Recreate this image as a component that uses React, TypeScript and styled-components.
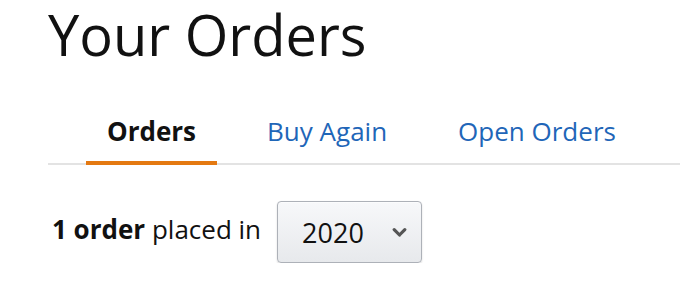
import { createGlobalStyle, styled } from 'styled-components';

const GlobalStyle = createGlobalStyle`
  html, body {
    margin: 0;
    padding: 0;
    background: #fff;
  }

  body {
    font-family: 'Open Sans', 'Noto Sans', Arial, sans-serif;
    color: #111;
  }
`;

const Page = styled.div`
  padding: 3px 0 0 48px;
`;

const Title = styled.h1`
  font-size: 56px;
  font-weight: 400;
  line-height: 1.4;
  margin: -8px 0 0;
`;

const TabBar = styled.nav`
  border-bottom: 2px solid #e3e3e3;
  display: flex;
  gap: 29px;
  margin-top: 43px;
  padding-left: 38px;
`;

const Tab = styled.a<{ $active?: boolean }>`
  border-bottom: 4px solid ${({ $active }) => ($active ? '#e47911' : 'transparent')};
  color: ${({ $active }) => ($active ? '#111' : '#1f66b8')};
  font-size: 26px;
  font-weight: ${({ $active }) => ($active ? 700 : 400)};
  line-height: 30px;
  margin-bottom: -2px;
  padding: 0 21px 15px;
  text-decoration: none;
`;

const FilterRow = styled.div`
  align-items: center;
  display: flex;
  gap: 16px;
  margin-top: 36px;
  padding-left: 4px;
`;

const Summary = styled.span`
  font-size: 26px;
  margin-bottom: 6px;

  & b {
    font-weight: 700;
  }
`;

const YearSelect = styled.button`
  align-items: center;
  background: linear-gradient(to bottom, #f7f8fa, #e7e9ec);
  border: 1px solid #adb1b8;
  border-radius: 4px;
  box-shadow: 0 1px 0 rgba(255, 255, 255, 0.6) inset, 0 1px 2px rgba(0, 0, 0, 0.15);
  color: #111;
  display: flex;
  font-family: inherit;
  font-size: 27px;
  gap: 28px;
  height: 62px;
  padding: 0 16px 0 24px;
  width: 145px;

  & svg {
    flex-shrink: 0;
  }
`;

const Chevron = () => (
  <svg width="15" height="11" viewBox="0 0 15 11" aria-hidden="true">
    <path d="M2.2 2.6 L7.5 8 L12.8 2.6" fill="none" stroke="#555" strokeWidth="3.2" strokeLinecap="round" strokeLinejoin="round" />
  </svg>
);

const App = () => {
  return (
    <>
      <GlobalStyle />
      <Page>
        <Title>Your Orders</Title>
        <TabBar>
          <Tab $active href="#">Orders</Tab>
          <Tab href="#">Buy Again</Tab>
          <Tab href="#">Open Orders</Tab>
        </TabBar>
        <FilterRow>
          <Summary>
            <b>1 order</b> placed in
          </Summary>
          <YearSelect type="button">
            2020
            <Chevron />
          </YearSelect>
        </FilterRow>
      </Page>
    </>
  );
};

export default App;
